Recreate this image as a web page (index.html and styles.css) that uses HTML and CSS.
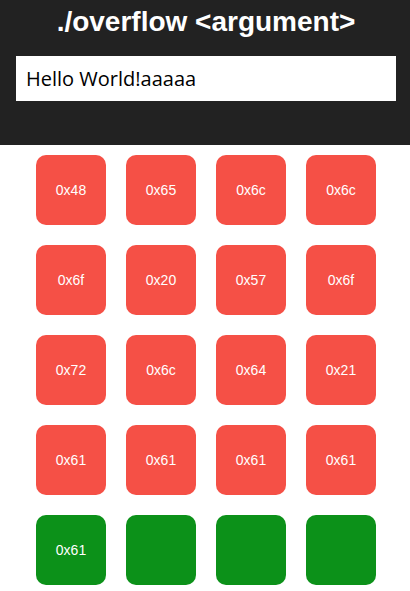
FILE: index.html
```html
<!DOCTYPE html>
<html>
<head>
<meta charset="utf-8">
<link rel="stylesheet" href="styles.css">
</head>
<body>
<header class="top">
  <h1 class="title">./overflow &lt;argument&gt;</h1>
  <div class="field">Hello World!aaaaa</div>
</header>
<main class="grid">
  <div class="cell red">0x48</div>
  <div class="cell red">0x65</div>
  <div class="cell red">0x6c</div>
  <div class="cell red">0x6c</div>
  <div class="cell red">0x6f</div>
  <div class="cell red">0x20</div>
  <div class="cell red">0x57</div>
  <div class="cell red">0x6f</div>
  <div class="cell red">0x72</div>
  <div class="cell red">0x6c</div>
  <div class="cell red">0x64</div>
  <div class="cell red">0x21</div>
  <div class="cell red">0x61</div>
  <div class="cell red">0x61</div>
  <div class="cell red">0x61</div>
  <div class="cell red">0x61</div>
  <div class="cell green">0x61</div>
  <div class="cell green"></div>
  <div class="cell green"></div>
  <div class="cell green"></div>
</main>
</body>
</html>
```
FILE: styles.css
```css
html, body {
  margin: 0;
  padding: 0;
  background: #ffffff;
  font-family: "Liberation Sans", Arial, sans-serif;
}
.top {
  background: #222222;
  height: 145px;
  box-sizing: border-box;
  padding: 5px 14px 0 16px;
  display: flex;
  flex-direction: column;
}
.title {
  margin: 0;
  color: #ffffff;
  font-family: "Liberation Sans", Arial, sans-serif;
  font-size: 28px;
  font-weight: bold;
  text-align: center;
  line-height: 34px;
}
.field {
  margin-top: 17px;
  height: 45px;
  background: #ffffff;
  color: #000000;
  font-family: "Open Sans", "Noto Sans", sans-serif;
  font-size: 20px;
  line-height: 45px;
  padding-left: 10px;
}
.grid {
  display: grid;
  grid-template-columns: repeat(4, 70px);
  grid-auto-rows: 70px;
  gap: 20px;
  padding: 10px 0 0 36px;
}
.cell {
  border-radius: 10px;
  color: #ffffff;
  font-size: 14px;
  display: flex;
  align-items: center;
  justify-content: center;
}
.red { background: #f55046; }
.green { background: #0c9119; }
```
